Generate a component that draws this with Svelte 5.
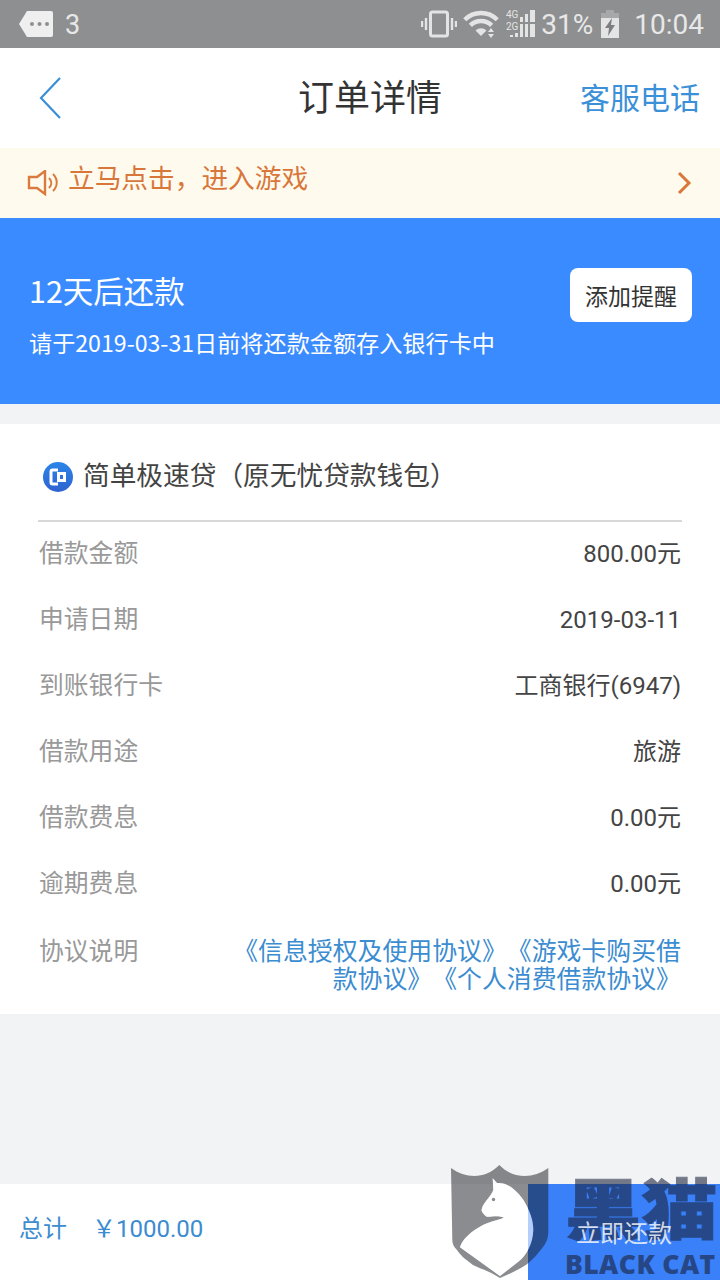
<script>
  const rows = [
    ['借款金额', '800.00元'],
    ['申请日期', '2019-03-11'],
    ['到账银行卡', '工商银行(6947)'],
    ['借款用途', '旅游'],
    ['借款费息', '0.00元'],
    ['逾期费息', '0.00元']
  ];
  const cat = 'M41.700 13.300L46 18C50 18 54 19 54 19C62 22 69 30 73 36C79 46 82.500 56 82.300 65C82 78 76 90 67 97L49 111L9 82.300C11 75 20 66 32 60C40 56 46 56 53 52.500C46 50 40 52 35.700 51.700C32 49 30 46 30.700 44.300C33 36 40 32 42.300 25Z';
  const shield = 'M0 3C15 14 35 14 48.300 0C62 14 82 14 97.300 3V67C97 74 95 78 92 82C86 90 82 94 78.600 97C70 104 60 108 49 113C38 106 30 104 22 100C14 94 9 90 6 85C3 82 1.300 79 1.300 75Z';
</script>

<div class="page">
  <header class="status">
    <div class="status-left">
      <svg width="34" height="26" viewBox="0 0 34 26"><path d="M8 0H32a2 2 0 0 1 2 2V24a2 2 0 0 1-2 2H8L0 13Z" fill="#efefef"/><circle cx="13" cy="13" r="2" fill="#8e8f91"/><circle cx="20.500" cy="13" r="2" fill="#8e8f91"/><circle cx="28" cy="13" r="2" fill="#8e8f91"/></svg>
      <span class="count">3</span>
    </div>
    <div class="status-right">
      <svg class="vib" width="36" height="28" viewBox="0 0 36 28" fill="none" stroke="#e4e4e4"><rect x="9.500" y="2" width="17" height="24" rx="2" stroke-width="3"/><path d="M5 8V20M1 11V17M31 8V20M35 11V17" stroke-width="2.400"/></svg>
      <svg class="wifi" width="36" height="28" viewBox="0 0 36 28">
        <clipPath id="fan"><path d="M0 0H36V8L18 26L0 8Z"/></clipPath>
        <g clip-path="url(#fan)" fill="none" stroke="#e4e4e4" stroke-width="4.500"><circle cx="18" cy="26" r="23"/><circle cx="18" cy="26" r="15"/></g>
        <path d="M18 26L12.500 20.500A8 8 0 0 1 23.500 20.500Z" fill="#e4e4e4"/>
        <path d="M28 18L31 22H25ZM28 28L25 24H31Z" fill="#e4e4e4"/>
      </svg>
      <svg class="signal" width="30" height="30" viewBox="0 0 30 30"><g fill="#e4e4e4"><path d="M14 8h3v5h-3zM19 5h3v8h-3zM24 1h5v12h-5zM14 15h3v13h-3zM19 15h3v13h-3zM24 15h5v13h-5zM9 24h3v4H9zM4 26h3v2H4z"/></g><text x="0" y="9" class="net">4G</text><text x="0" y="21" class="net">2G</text></svg>
      <span class="pct">31%</span>
      <svg class="batt" width="18" height="28" viewBox="0 0 18 28"><path d="M5 0h8v3H5z" fill="#a8a8a8"/><path d="M0 3h18v6H0z" fill="#a8a8a8"/><path d="M0 8h18v20H0z" fill="#e4e4e4"/><path d="M11 8L4 18h4l-1 8 7-11h-4z" fill="#7d7e80"/></svg>
      <span class="time">10:04</span>
    </div>
  </header>

  <nav class="nav">
    <svg class="back" width="24" height="42" viewBox="0 0 24 42" fill="none" stroke="#3a8fd6" stroke-width="2.200"><path d="M22 1L3 21L22 41"/></svg>
    <h1>订单详情</h1>
    <span class="service">客服电话</span>
  </nav>

  <div class="notice">
    <svg width="32" height="26" viewBox="0 0 32 26" fill="none" stroke="#d97b3f" stroke-width="2.400"><path d="M2 7H10L18 1V24L10 18H2Z"/><path d="M22 8C25 11 25 15 22 18M26 4C31 9 31 16 26 21" stroke-width="2"/></svg>
    <span class="notice-text">立马点击，进入游戏</span>
    <svg class="chev" width="15" height="24" viewBox="0 0 15 24" fill="none" stroke="#d9763a" stroke-width="3"><path d="M2 2L12 12L2 22"/></svg>
  </div>

  <section class="hero">
    <div class="hero-copy">
      <div class="hero-title">12天后还款</div>
      <div class="hero-sub">请于2019-03-31日前将还款金额存入银行卡中</div>
    </div>
    <button class="remind">添加提醒</button>
  </section>

  <section class="card">
    <div class="card-head">
      <svg width="30" height="30" viewBox="0 0 30 30">
        <defs><linearGradient id="lg" x1="0" y1="0" x2="0" y2="1"><stop offset="0" stop-color="#2a86e8"/><stop offset="1" stop-color="#2f62cf"/></linearGradient></defs>
        <circle cx="15" cy="15" r="15" fill="url(#lg)"/>
        <path d="M15 8H9.500A1.500 1.500 0 0 0 8 9.500V20.500A1.500 1.500 0 0 0 9.500 22H15" fill="none" stroke="#fff" stroke-width="3"/>
        <path fill-rule="evenodd" d="M14 10H23V20H14ZM17 13V17H20V13Z" fill="#fff"/>
      </svg>
      <span>简单极速贷（原无忧贷款钱包）</span>
    </div>
    <div class="rows">
      {#each rows as [label, value]}
        <div class="row"><span class="label">{label}</span><span class="value">{value}</span></div>
      {/each}
      <div class="row agree">
        <span class="label">协议说明</span>
        <span class="links">《信息授权及使用协议》《游戏卡购买借款协议》《个人消费借款协议》</span>
      </div>
    </div>
  </section>

  <div class="spacer"></div>

  <footer class="bar">
    <div class="total"><span>总计</span><span>￥1000.00</span></div>
    <button class="pay"><span class="pay-label">立即还款</span></button>
  </footer>

  <div class="mark" aria-hidden="true">
    <svg class="shield" width="100" height="116" viewBox="0 0 100 116">
      <path fill-rule="evenodd" d={shield + cat} fill="#16191f" fill-opacity=".5"/>
      <path d={cat} fill="#fff" fill-opacity=".62"/>
      <circle cx="42.500" cy="34.500" r="1.700" fill="#8a8a8a"/>
    </svg>
    <div class="mark-cn">黑猫</div>
    <div class="mark-en">BLACK CAT</div>
  </div>
</div>

<style>
  :global(body) { margin: 0; background: #f2f3f5; }
  .page {
    position: relative; width: 720px; height: 1280px; overflow: hidden;
    display: flex; flex-direction: column; background: #f2f3f5;
    font-family: "Noto Sans CJK SC", Roboto, sans-serif;
    text-spacing-trim: space-all;
  }
  .status {
    height: 48px; flex: none; background: #8e8f91; color: #e8e8e8;
    display: flex; justify-content: space-between; align-items: center;
    padding: 0 16px 0 19px; box-sizing: border-box; font-family: Roboto, sans-serif;
  }
  .status-left, .status-right { display: flex; align-items: center; }
  .count { font-size: 27px; margin-left: 12px; padding-top: 2px; }
  .vib { margin-right: 6px; }
  .wifi { margin-right: 7px; }
  .signal { margin-right: 5px; }
  .net { font: 10px Roboto, sans-serif; fill: #e4e4e4; }
  .pct { font-size: 28px; padding-top: 1px; }
  .batt { margin: 0 15px 0 8px; }
  .time { font-size: 28px; padding-top: 1px; }

  .nav {
    position: relative; height: 100px; flex: none; background: #fff;
    display: flex; align-items: center; justify-content: space-between;
    padding: 0 20px 0 38px; box-sizing: border-box;
  }
  h1 {
    position: absolute; left: 20px; right: 0; top: 23px; margin: 0; text-align: center;
    font-size: 36px; line-height: 48px; font-weight: 400; color: #333;
  }
  .service { font-size: 30px; color: #3b90d8; margin-top: -4px; }

  .notice {
    height: 70px; flex: none; background: #fefbee; display: flex; align-items: center;
    padding: 0 28px 0 27px; box-sizing: border-box;
  }
  .notice-text { flex: 1; font-size: 26.700px; color: #d9763a; margin-left: 9px; margin-top: -13px; }

  .hero {
    height: 186px; flex: none; background: #3a8bff; color: #fff;
    display: flex; justify-content: space-between; align-items: center;
    padding: 0 28px 0 29px; box-sizing: border-box;
  }
  .hero-copy { margin-top: 6px; }
  .hero-title { font-size: 30.500px; line-height: 40px; }
  .hero-sub { font-size: 23.150px; line-height: 32px; margin-top: 16px; }
  .remind {
    width: 122px; height: 54px; border: 0; border-radius: 8px; background: #fff;
    color: #333; font: 23px "Noto Sans CJK SC", sans-serif; padding: 0; margin-top: -32px;
  }

  .card { margin-top: 20px; height: 590px; flex: none; background: #fff; padding: 0 38px; box-sizing: border-box; }
  .card-head {
    height: 96px; display: flex; align-items: center; gap: 11px; padding-left: 5px;
    border-bottom: 2px solid #d8d8d8; font-size: 26.700px; color: #444;
  }
  .card-head svg { margin-top: 10px; }
  .card-head span { margin-top: 2px; margin-left: -1px; }
  .rows { margin-top: -4px; padding-right: 1px; }
  .row { height: 66px; display: flex; justify-content: space-between; align-items: baseline; line-height: 66px; }
  .label { color: #999; font-size: 24.800px; margin-left: 1px; }
  .value { color: #444; font-size: 24px; font-family: Roboto, "Noto Sans CJK SC", sans-serif; }
  .agree { height: auto; padding-top: 10px; line-height: 28px; }
  .agree .label { flex: none; line-height: 50px; }
  .links { color: #3b8cd0; text-align: right; line-height: 28px; font-size: 24.880px; width: 452px; flex: none; padding-top: 8px; }

  .spacer { flex: 1; }
  .bar { height: 96px; flex: none; background: #fff; display: flex; justify-content: space-between; align-items: center; }
  .total { display: flex; gap: 25px; padding-left: 19px; padding-bottom: 12px; font-size: 24px; color: #3b8cd0; font-family: Roboto, "Noto Sans CJK SC", sans-serif; }
  .pay {
    width: 192px; height: 96px; border: 0; padding: 0 0 2px; background: #3a80f8; color: #fff;
    font: 24px "Noto Sans CJK SC", sans-serif;
  }
  .pay-label { position: relative; z-index: 2; color: rgba(255, 255, 255, .8); }

  .mark { position: absolute; left: 451px; top: 1165px; width: 269px; height: 115px; }
  .shield { position: absolute; left: 0; top: 0; }
  .mark-cn {
    position: absolute; left: 114px; top: -10px; font-size: 72px; line-height: 100px; font-weight: 900;
    color: #19203a; opacity: .58; -webkit-text-stroke: 1px #19203a;
    transform: scale(1.06, .92); transform-origin: left center; white-space: nowrap;
  }
  .mark-en {
    position: absolute; left: 114px; top: 82px; font: 800 26px/34px "Open Sans", sans-serif;
    color: #19203a; opacity: .6; letter-spacing: .4px; white-space: nowrap;
    transform: scaleX(1.02); transform-origin: left center;
  }
</style>
